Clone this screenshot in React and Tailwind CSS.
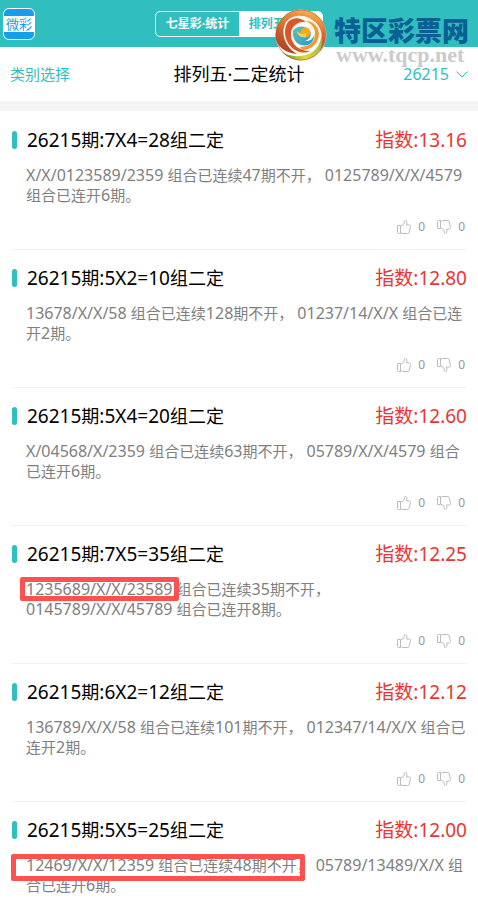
import React from "react";

const ENTRIES = [
  { title: "26215期:7X4=28组二定", index: "13.16", lines: [["X/X/0123589/2359 组合已连续47期不开，", "0125789/X/X/4579"], ["组合已连开6期。"]] },
  { title: "26215期:5X2=10组二定", index: "12.80", lines: [["13678/X/X/58 组合已连续128期不开，", "01237/14/X/X 组合已连"], ["开2期。"]] },
  { title: "26215期:5X4=20组二定", index: "12.60", lines: [["X/04568/X/2359 组合已连续63期不开，", "05789/X/X/4579 组合"], ["已连开6期。"]] },
  { title: "26215期:7X5=35组二定", index: "12.25", mark: "short", lines: [["1235689/X/X/23589 组合已连续35期不开，"], ["0145789/X/X/45789 组合已连开8期。"]] },
  { title: "26215期:6X2=12组二定", index: "12.12", lines: [["136789/X/X/58 组合已连续101期不开，", "012347/14/X/X 组合已"], ["连开2期。"]] },
  { title: "26215期:5X5=25组二定", index: "12.00", mark: "long", lines: [["12469/X/X/12359 组合已连续48期不开，", "05789/13489/X/X 组"], ["合已连开6期。"]] },
];

// Digits and letters are set one size above the Chinese characters.
function Mixed({ text, latin }) {
  return text.split(/([\x20-\x7e]+)/).map((run, i) =>
    i % 2 ? <span key={i} className={latin}>{run}</span> : run
  );
}

function Thumb({ down }) {
  return (
    <svg viewBox="0 0 14 14" className={down ? "h-3.5 w-3.5 -scale-y-100" : "h-3.5 w-3.5"} fill="none" stroke="#bdbdbd" strokeWidth="1" strokeLinejoin="round" aria-hidden="true">
      <path d="M.5 5.5h3v8h-2q-1 0-1-1z" />
      <path d="M3.5 6.2 6.4 4.6Q7.3 3.5 7.3 1.5 7.3.5 8.3.5q1.6 0 1.6 2.1L9.6 5h3q1.1.1.9 1.4l-1.3 5.8q-.3 1.3-1.5 1.3H5.5l-2-.8" />
    </svg>
  );
}

function Entry({ entry }) {
  return (
    <article className="ml-3 mr-[11px] border-b border-[#f0f0f0] pt-[19px] pb-3.5">
      <div className="flex h-[18px] items-center">
        <span className="h-[18px] w-[5px] rounded-full bg-[#30bebe]" />
        <h2 className="ml-2.5 flex-1 whitespace-nowrap text-[18px] leading-[18px] text-black">
          <Mixed text={entry.title} latin="text-[19px]" />
        </h2>
        <span className="whitespace-nowrap text-[19px] leading-5 text-[#e83632]">指数:{entry.index}</span>
      </div>
      <div className="relative ml-3.5 mt-4 text-[15px] leading-5 text-[#808080]">
        {entry.lines.map((clauses) => (
          <p key={clauses[0]} className="flex h-5 gap-1 whitespace-nowrap">
            {clauses.map((clause) => (
              <span key={clause}><Mixed text={clause} latin="text-[16px]" /></span>
            ))}
          </p>
        ))}
        {entry.mark === "short" && <span className="absolute -left-1.5 -top-0.5 h-6 w-[159px] rounded-xs border-5 border-[#fb5251]" />}
        {entry.mark === "long" && <span className="absolute -left-[15px] -top-px h-[27px] w-[294px] rounded-xs border-5 border-[#fb5251]" />}
      </div>
      <div className="mt-3.5 mr-0.5 flex h-4 items-center justify-end gap-3 text-[12px] leading-4 text-[#999]">
        <button className="flex items-center gap-[7px]" aria-label="赞"><Thumb />0</button>
        <button className="flex items-center gap-[7px]" aria-label="踩"><Thumb down />0</button>
      </div>
    </article>
  );
}

function Watermark() {
  return (
    <div className="pointer-events-none absolute right-[9px] top-[9px] flex items-start">
      <svg viewBox="0 0 52 52" className="h-[52px] w-[52px]" aria-hidden="true">
        <defs>
          <linearGradient id="rim" x1=".7" y1="0" x2=".4" y2="1">
            <stop offset="0" stopColor="#f9bd55" /><stop offset=".45" stopColor="#dd6a35" /><stop offset="1" stopColor="#b03c22" />
          </linearGradient>
          <linearGradient id="red" x1=".6" y1="0" x2=".2" y2="1">
            <stop offset="0" stopColor="#ee9440" /><stop offset="1" stopColor="#a8391f" />
          </linearGradient>
          <linearGradient id="leaf" x1="0" y1="0" x2="1" y2="0">
            <stop offset="0" stopColor="#3f8b2d" /><stop offset=".6" stopColor="#e3da38" /><stop offset="1" stopColor="#8fc045" />
          </linearGradient>
          <linearGradient id="sea" x1="0" y1="0" x2="1" y2="1">
            <stop offset="0" stopColor="#6cc5b0" /><stop offset="1" stopColor="#1a9ad6" />
          </linearGradient>
          <clipPath id="ball"><circle cx="26" cy="26" r="25.5" /></clipPath>
        </defs>
        <g clipPath="url(#ball)">
          <rect width="52" height="52" fill="#fff8ec" />
          <path d="M9 7C18-2 36-2 45 9c8 10 8 24-1 34 5-12 4-24-5-31C30 4 17 4 9 7Z" fill="url(#rim)" />
          <path d="M7 9C2 15 0 21 0 27c1 9 9 17 22 18C10 38 5 24 11 13 18 5 31 5 38 12 30 3 17 1 7 9Z" fill="url(#red)" />
          <path d="M13 13C7 22 10 36 22 42c5 2 9 2 13 0C23 42 15 34 16 24c1-8 8-12 15-11C25 8 18 8 13 13Z" fill="#d9572e" />
          <path d="M5 42C15 49 28 48 36 44 43 40 47 32 46 23c3 12 0 22-11 27C23 55 11 51 5 42Z" fill="url(#leaf)" />
          <path d="M27 41C37 41 44 34 44 24 43 17 38 12 31 12c6 3 9 7 9 13 0 8-6 13-15 13Z" fill="#ed9b37" />
          <path d="M18 22C19 15 26 12 33 15c7 4 8 12 4 18C31 40 19 36 18 26Z" fill="url(#sea)" />
          <path d="M18 22C20 13 31 11 37 17c6 7 1 16-7 15 5-2 7-6 5-10-4-6-14-6-17 0Z" fill="#fff8ec" />
          <circle cx="30.500" cy="23.500" r="5" fill="#f8a919" />
          <path d="M31 28c-5 1-9-2-9-6 3 3 6 4 9 2" fill="#f4d24a" />
        </g>
        <circle cx="26" cy="26" r="25" fill="none" stroke="#c2522d" strokeOpacity=".6" />
      </svg>
      <div className="ml-[7px] mt-2 whitespace-nowrap">
        <div className="text-[27px] font-black leading-7 text-[#0b6093]">特区彩票网</div>
        <div className="ml-0.5 font-['Liberation_Serif',serif] text-[22px] font-bold leading-5 text-[#cbcbcb]">www.tqcp.net</div>
      </div>
    </div>
  );
}

export default function App() {
  return (
    <div className="relative min-h-screen bg-white font-['Noto_Sans','Noto_Sans_CJK_SC',sans-serif]">
      <header className="flex h-[47px] items-center bg-[#30bebe] px-[3px]">
        <div className="flex-1">
          <a href="#home" aria-label="微彩" className="flex h-8 w-8 items-center overflow-hidden rounded-md border border-white bg-[#169ee8]">
            <span className="flex h-4 w-full items-center justify-center bg-white text-[13px] leading-4 text-[#169ee8]">微彩</span>
          </a>
        </div>
        <nav className="flex h-[26px] w-[168px] overflow-hidden rounded-[5px] border border-white text-[12px] font-bold leading-6">
          <button className="flex-1 whitespace-nowrap text-white">七星彩·统计</button>
          <button className="flex-1 whitespace-nowrap bg-white text-[#30bebe]">排列五·统计</button>
        </nav>
        <div className="flex-1" />
      </header>
      <div className="grid h-[54px] grid-cols-3 items-center px-2.5 text-[15px] text-[#30bebe]">
        <button className="justify-self-start">类别选择</button>
        <h1 className="justify-self-center whitespace-nowrap text-[18px] text-black">排列五·二定统计</h1>
        <button className="flex items-center gap-[7px] justify-self-end text-[16px]">
          26215
          <svg viewBox="0 0 12 7" className="h-[7px] w-3" fill="none" stroke="currentColor" aria-hidden="true"><path d="m.5.5 5.500 5.500 5.500-5.500" /></svg>
        </button>
      </div>
      <div className="h-2.5 bg-[#f4f4f4]" />
      <main className="pt-px">
        {ENTRIES.map((entry) => <Entry key={entry.title} entry={entry} />)}
      </main>
      <Watermark />
    </div>
  );
}
